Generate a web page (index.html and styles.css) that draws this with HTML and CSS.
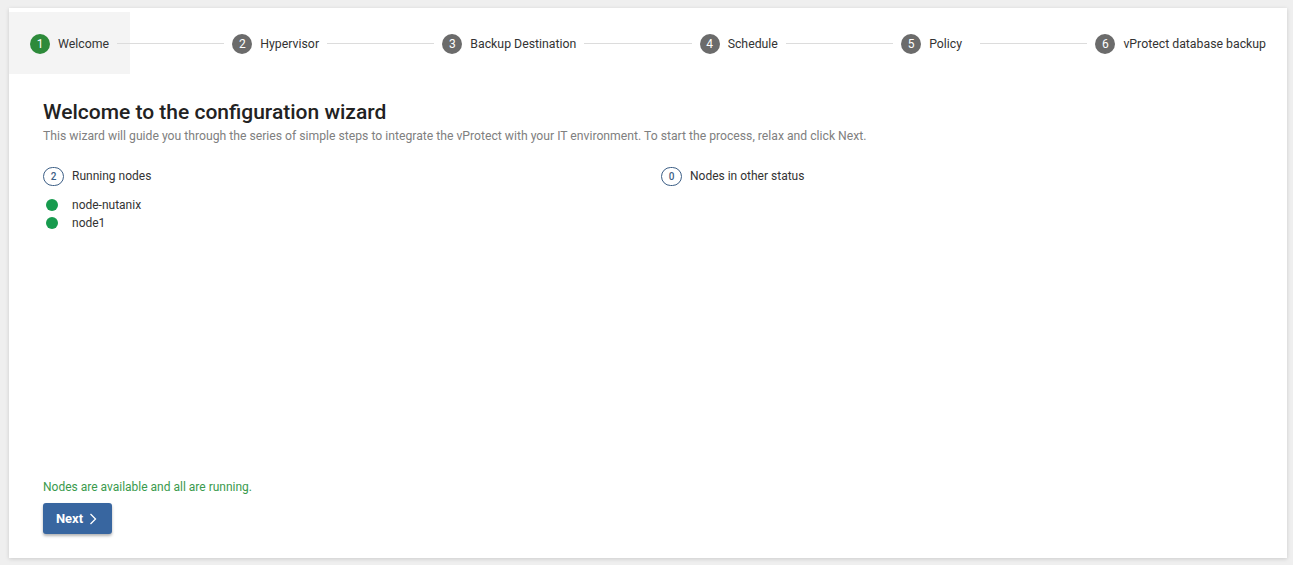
FILE: index.html
```html
<!DOCTYPE html>
<html>
<head>
<meta charset="utf-8">
<link rel="stylesheet" href="styles.css">
</head>
<body>
<div class="card">
  <div class="stepper">
    <div class="step active"><span class="num">1</span><span class="label">Welcome</span></div>
    <div class="line"></div>
    <div class="step"><span class="num">2</span><span class="label">Hypervisor</span></div>
    <div class="line"></div>
    <div class="step"><span class="num">3</span><span class="label">Backup Destination</span></div>
    <div class="line"></div>
    <div class="step"><span class="num">4</span><span class="label">Schedule</span></div>
    <div class="line"></div>
    <div class="step"><span class="num">5</span><span class="label label-policy">Policy</span></div>
    <div class="line"></div>
    <div class="step"><span class="num">6</span><span class="label">vProtect database backup</span></div>
  </div>
  <div class="content">
    <h1 class="title">Welcome to the configuration wizard</h1>
    <p class="subtitle">This wizard will guide you through the series of simple steps to integrate the vProtect with your IT environment. To start the process, relax and click Next.</p>
    <div class="columns">
      <div class="col">
        <div class="col-head"><span class="badge">2</span><span>Running nodes</span></div>
        <ul class="nodes">
          <li><span class="dot"></span>node-nutanix</li>
          <li><span class="dot"></span>node1</li>
        </ul>
      </div>
      <div class="col">
        <div class="col-head"><span class="badge">0</span><span>Nodes in other status</span></div>
      </div>
    </div>
    <div class="spacer"></div>
    <p class="status">Nodes are available and all are running.</p>
    <button class="next">Next <svg width="8" height="12" viewBox="0 0 8 12"><path d="M1.5 1 L6.5 6 L1.5 11" fill="none" stroke="#fff" stroke-width="1.3"/></svg></button>
  </div>
</div>
</body>
</html>
```

FILE: styles.css
```css
html, body {
  margin: 0;
  padding: 0;
}
body {
  background: #efefef;
  font-family: Roboto, "Noto Sans", Arial, sans-serif;
  color: #333;
  width: 1293px;
  height: 565px;
  overflow: hidden;
  padding: 8px 6px 0 9px;
  box-sizing: border-box;
}
.card {
  background: #fff;
  height: 550px;
  box-shadow: 0 1px 4px rgba(0,0,0,0.15);
  padding-top: 4px;
  box-sizing: border-box;
  display: flex;
  flex-direction: column;
}
.stepper {
  display: flex;
  align-items: center;
  height: 62px;
}
.step {
  display: flex;
  align-items: center;
  height: 62px;
  padding: 1px 21px 0;
  box-sizing: border-box;
  font-size: 12.3px;
  color: #333;
  position: relative;
  z-index: 1;
}
.step.active {
  background: #f4f4f4;
}
.num {
  width: 20px;
  height: 20px;
  border-radius: 50%;
  background: #6b6b6b;
  color: #fff;
  font-size: 12px;
  display: flex;
  align-items: center;
  justify-content: center;
  margin-right: 8px;
}
.step.active .num {
  background: #2d8a3a;
}
.label-policy {
  margin-right: 10px;
}
.line {
  flex: 1;
  height: 1px;
  background: #dcdcdc;
  margin: 1px -13px 0;
  position: relative;
  z-index: 2;
}
.content {
  flex: 1;
  padding: 25px 34px 24px 34px;
  display: flex;
  flex-direction: column;
}
.title {
  margin: 0;
  font-size: 21px;
  font-weight: 500;
  color: #222;
  line-height: 26px;
}
.subtitle {
  margin: 3px 0 0;
  font-size: 12.2px;
  color: #808080;
  line-height: 16px;
}
.columns {
  display: grid;
  grid-template-columns: 1fr 1fr;
  column-gap: 26px;
  margin-top: 22px;
}
.col-head {
  display: flex;
  align-items: center;
  font-size: 12px;
  color: #333;
  height: 20px;
}
.badge {
  width: 19px;
  height: 17px;
  border: 1px solid #3d5f86;
  border-radius: 10px;
  font-size: 10px;
  font-weight: 500;
  color: #3d5f86;
  display: flex;
  align-items: center;
  justify-content: center;
  margin-right: 8px;
}
.nodes {
  list-style: none;
  margin: 10px 0 0;
  padding: 0;
}
.nodes li {
  display: flex;
  align-items: center;
  font-size: 12px;
  color: #333;
  height: 18px;
}
.dot {
  width: 12px;
  height: 12px;
  border-radius: 50%;
  background: #179b4e;
  margin: 0 14px 0 3px;
}
.spacer {
  flex: 1;
}
.status {
  margin: 0 0 8px;
  font-size: 12px;
  color: #3a9a4d;
  line-height: 16px;
}
.next {
  align-self: flex-start;
  width: 69px;
  height: 31px;
  border: none;
  border-radius: 3px;
  background: #3866a0;
  color: #fff;
  font-family: Roboto, Arial, sans-serif;
  font-weight: 700;
  font-size: 13px;
  display: flex;
  align-items: center;
  justify-content: center;
  gap: 6px;
  box-shadow: 0 2px 3px rgba(0,0,0,0.3);
  padding: 0 2px 0 0;
}
```
